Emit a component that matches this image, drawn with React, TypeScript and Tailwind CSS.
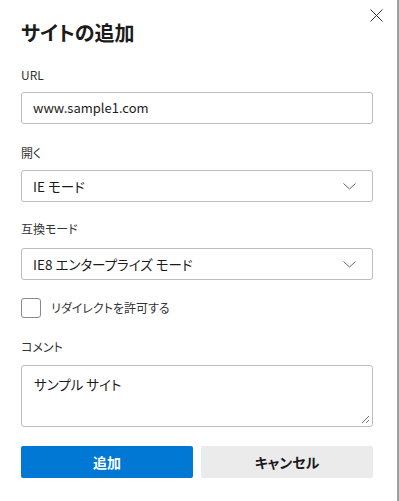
import { useState } from 'react';

function Chevron() {
  return (
    <svg width="13" height="7" viewBox="0 0 13 7" className="text-[#666]">
      <path d="M0.5 0.5 L6.5 6 L12.5 0.5" fill="none" stroke="currentColor" strokeWidth="1" />
    </svg>
  );
}

function Select({ value }: { value: string }) {
  return (
    <div className="flex h-8 w-[352px] items-center justify-between rounded-[3px] border border-[#bdbdbd] bg-white pl-[11px] pr-[16px] text-[13.5px] text-[#1b1b1b]">
      <span>{value}</span>
      <Chevron />
    </div>
  );
}

export default function App() {
  const [checked, setChecked] = useState(false);

  return (
    <div className="relative h-[501px] w-[399px] overflow-hidden border-r-2 border-[#a0a0a0] bg-white pl-[21px] pt-[19px] font-['Noto_Sans_CJK_JP','Noto_Sans',sans-serif] text-[#1b1b1b] [font-feature-settings:'palt']">
      {/* Close */}
      <button className="absolute left-[370px] top-[9px] p-0">
        <svg width="13" height="13" viewBox="0 0 13 13">
          <path d="M0.5 0.5 L12.5 12.5 M12.5 0.5 L0.5 12.5" stroke="#333" strokeWidth="1" />
        </svg>
      </button>

      <h1 className="text-[20px] font-semibold leading-[28px]">サイトの追加</h1>

      <div className="mt-[20px] text-[12px] leading-4 text-[#333]">URL</div>
      <div className="mt-[9px] flex h-8 w-[352px] items-center rounded-[3px] border border-[#bdbdbd] pl-[11px] text-[13px]">
        www.sample1.com
      </div>

      <div className="mt-[21px] text-[12px] leading-4 text-[#333]">開く</div>
      <div className="mt-[9px]">
        <Select value="IE モード" />
      </div>

      <div className="mt-[19px] text-[12px] leading-4 text-[#333]">互換モード</div>
      <div className="mt-[11px]">
        <Select value="IE8 エンタープライズ モード" />
      </div>

      <label className="mt-[18px] flex items-center gap-[10px]">
        <span
          onClick={() => setChecked(!checked)}
          className="h-5 w-5 rounded-[3px] border border-[#8a8a8a] bg-white"
        />
        <span className="text-[12px] text-[#333]">リダイレクトを許可する</span>
      </label>

      <div className="mt-[21px] text-[12px] leading-4 text-[#333]">コメント</div>
      <div className="relative mt-[10px] h-[62px] w-[352px] rounded-[3px] border border-[#bdbdbd] pl-[12px] pt-[8px] text-[13.5px]">
        サンプル サイト
        <svg width="10" height="10" viewBox="0 0 10 10" className="absolute bottom-[2px] right-[2px]">
          <path d="M9 2 L2 9 M9 6 L6 9" stroke="#777" strokeWidth="1" />
        </svg>
      </div>

      <div className="mt-[19px] flex w-[352px] gap-2">
        <button className="h-8 flex-1 rounded-[2px] bg-[#0078d4] text-[14px] font-semibold text-white">追加</button>
        <button className="h-8 flex-1 rounded-[2px] bg-[#ebebeb] text-[14px] font-semibold text-[#1b1b1b]">キャンセル</button>
      </div>
    </div>
  );
}
